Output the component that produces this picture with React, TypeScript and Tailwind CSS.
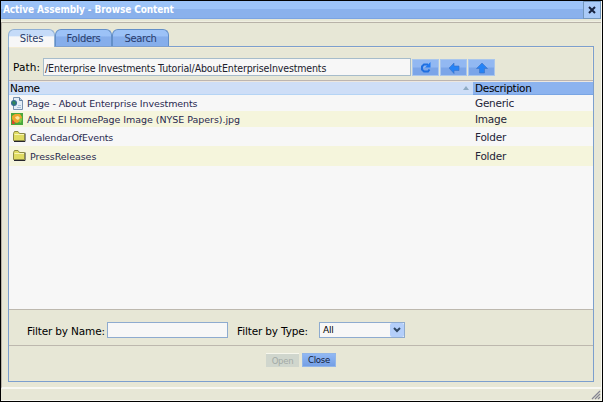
import React from "react";

const rows = [
  { icon: "page", name: "Page - About Enterprise Investments", type: "Generic", row: "h-4 bg-[#f7f7f7]", pad: "pl-[2px] gap-[4px]", text: "tracking-[-0.11px]" },
  { icon: "image", name: "About EI HomePage Image (NYSE Papers).jpg", type: "Image", row: "h-4 bg-[#f5f5dc]", pad: "pl-[2px] gap-[4px]", text: "tracking-[-0.04px]" },
  { icon: "folder", name: "CalendarOfEvents", type: "Folder", row: "h-[19px] bg-[#f7f7f7]", pad: "pl-[4px] gap-[3px]", text: "tracking-[-0.16px]" },
  { icon: "folder", name: "PressReleases", type: "Folder", row: "h-5 bg-[#f5f5dc]", pad: "pl-[4px] gap-[3px]", text: "tracking-[-0.06px]" },
];

function RowIcon({ kind }: { kind: string }) {
  if (kind === "page")
    return (
      <svg width="12" height="13" viewBox="0 0 12 13" className="shrink-0">
        <path d="M2.5.5h6l3 3v9h-9z" fill="#e3edf7" stroke="#7891ae" />
        <path d="M8.5.5v3h3" fill="#b9cee2" stroke="#5f7d9e" />
        <path d="M6 10.5h4M7 8.500h3" stroke="#a9c0d8" />
        <circle cx="3" cy="6" r="3" fill="#326b91" />
        <path d="M1 5l2-1 2 2-2 2z" fill="#2f8a55" />
      </svg>
    );
  if (kind === "image")
    return (
      <svg width="12" height="12" viewBox="0 0 12 12" className="shrink-0">
        <path d="M0 0h12v12H0z" fill="#48a83c" />
        <path d="M1 3l3-2 5 0 2 3-1 4-4 2-3-1-2-3z" fill="#eda52c" />
        <path d="M4 4l3-1 2 2-2 2-2-1z" fill="#f9e7a0" />
        <path d="M1 7l2 1 1 3H1z" fill="#d9482c" />
        <path d="M9 5l2 1-1 4-2-1z" fill="#7fcf4b" />
      </svg>
    );
  return (
    <svg width="14" height="12" viewBox="0 0 14 12" className="shrink-0">
      <path d="M1 10.500h11V2.500" fill="none" stroke="#26262e" />
      <path d="M.5 9.500V2.500l1-2h3.500l1.500 2h5v7z" fill="#dfdb62" stroke="#8c8b45" />
      <path d="M1.500 3.500h9.500" stroke="#f7f5b5" />
    </svg>
  );
}

function Tab({ label, active, cls }: { label: string; active?: boolean; cls: string }) {
  return (
    <div
      className={
        "flex justify-center rounded-t-[6px] border border-b-0 text-[10px] leading-[17px] text-[#293c6b] " +
        cls +
        (active
          ? " h-[18px] border-[#8eafd4] bg-linear-to-b from-[#c5dbf8] from-35% to-[#f7f7f7] to-40%"
          : " h-[17px] border-[#638fc8] bg-linear-to-b from-[#9cc2f7] from-35% to-[#86aeeb] to-45%")
      }
    >
      {label}
    </div>
  );
}

function NavButton({ children }: { children: React.ReactNode }) {
  return (
    <button className="flex h-[17px] w-[27px] items-center justify-center border border-[#a9c6ec] bg-linear-to-b from-[#92b8f2] from-45% to-[#7ba5e8] to-55% pt-px">
      {children}
    </button>
  );
}

export default function App() {
  return (
    <div className="h-[402px] w-[603px] overflow-hidden border border-black bg-[#e7e7d6] font-['DejaVu_Sans',Verdana,sans-serif] text-black">
      <div className="flex h-full flex-col border-r border-b border-[#f8f8f2] whitespace-nowrap">
        <header className="flex h-[18px] shrink-0 justify-between border-b border-[#7ba4e2] bg-linear-to-b from-[#9cc3f8] from-45% to-[#8ab1ec] to-50%">
          <h1 className="pl-[2px] text-[10px] leading-[17px] font-bold tracking-[-0.1px] text-white [font-stretch:condensed]">Active Assembly - Browse Content</h1>
          <button className="flex h-[18px] w-[18px] items-center justify-center border border-[#7297bd] bg-[#a9caf7]">
            <svg width="8" height="8" viewBox="0 0 8 8">
              <path d="M1 1l6 6M7 1L1 7" stroke="#17233f" strokeWidth="2" />
            </svg>
          </button>
        </header>
        <div className="h-[3px] shrink-0 border-b border-[#efefe2]" />
        <div className="flex h-[367px] shrink-0 flex-col border-t border-l border-[#b8b2a8] border-b-2 border-b-[#f8f8f2] pl-[6px]">
          <div className="flex h-[23px] shrink-0 items-end pt-[6px]">
            <div className="z-10 -mb-px"><Tab label="Sites" active cls="w-[47px] tracking-[-0.2px]" /></div>
            <Tab label="Folders" cls="w-[57px] tracking-[-0.3px]" />
            <Tab label="Search" cls="w-[57px] tracking-[-0.4px]" />
          </div>
          <main className="flex h-[336px] w-[586px] shrink-0 flex-col border border-[#7c9fce]">
            <section className="flex h-[33px] shrink-0 items-center border-t border-r border-[#f4ecd4] pt-[6px] pl-[4px]">
              <label className="w-[30px] pt-[2px] text-[10.500px] tracking-[0.1px]">Path:</label>
              <div className="mr-px h-[18px] w-[368px] border border-[#a6bccb] bg-[#f7f7f7] pt-px pl-[1px] text-[10.500px] leading-[16px] tracking-[-0.13px] text-[#20202c] [font-stretch:condensed]">
                /Enterprise Investments Tutorial/AboutEnterpriseInvestments
              </div>
              <div className="flex gap-[1px]">
                <NavButton>
                  <svg width="13" height="13" viewBox="0 0 13 13">
                    <path d="M9 3.500H5L3 5.500v3l2 2h4l1.500-2" fill="none" stroke="#1f6fe0" strokeWidth="2" />
                    <path d="M6 6.500h5.500V1z" fill="#1f78f0" />
                  </svg>
                </NavButton>
                <NavButton>
                  <svg width="12" height="12" viewBox="0 0 12 12">
                    <path d="M1 6l5-5v3h5v4.500H6v3z" fill="#2583f6" stroke="#3a70c4" strokeWidth=".6" />
                  </svg>
                </NavButton>
                <NavButton>
                  <svg width="12" height="12" viewBox="0 0 12 12">
                    <path d="M6 1l5.500 5.500H8.500V11h-5V6.500h-3z" fill="#2583f6" stroke="#3a70c4" strokeWidth=".6" />
                  </svg>
                </NavButton>
              </div>
            </section>
            <div className="h-[2px] shrink-0 border-t border-[#bdb5b0] bg-[#ede7df]" />
            <section className="h-[227px] shrink-0 bg-[#f7f7f7]">
              <div className="flex h-[13px] text-[10.500px] leading-[12px] tracking-[-0.3px]">
                <div className="flex w-[464px] items-center justify-between border-b border-[#b5d4f5] bg-[#cedef7] pr-[4px] pl-[1px]">
                  <span>Name</span>
                  <svg width="6" height="5" viewBox="0 0 6 5"><path d="M3 0l3 4H0z" fill="#8eaac3" /></svg>
                </div>
                <div className="flex-1 border-b border-[#79a5e4] bg-[#8cb3ef] pl-[2px]">Description</div>
              </div>
              {rows.map((r) => (
                <div key={r.name} className={"flex items-center " + r.row}>
                  <div className={"flex w-[464px] items-center text-[9.500px] leading-[10px] text-[#292950] " + r.pad}>
                    <RowIcon kind={r.icon} />
                    <span className={"mt-[2px] " + r.text}>{r.name}</span>
                  </div>
                  <div className="pl-[2px] text-[10.500px] leading-[14px] tracking-[-0.25px] text-[#242438]">{r.type}</div>
                </div>
              ))}
            </section>
            <section className="flex h-[37px] shrink-0 items-center border-y border-[#bdb8ae] pt-[5px] pl-[18px] text-[10.500px] tracking-[-0.15px]">
              <label className="w-[80px] pt-[3px]">Filter by Name:</label>
              <input className="h-[16px] w-[121px] border border-[#8eabcf] bg-[#f7f7f7]" />
              <label className="ml-[9px] w-[82px] pt-[3px]">Filter by Type:</label>
              <div className="flex h-[16px] w-[86px] items-center justify-between border border-[#8eabcf] bg-[#f7f7f7] pl-[3px] text-[9px]">
                <span className="pt-[2px]">All</span>
                <span className="flex h-[14px] w-[14px] items-center justify-center rounded-[2px] bg-[#b4cffa]">
                  <svg width="8" height="6" viewBox="0 0 8 6"><path d="M1 1l3 3 3-3" fill="none" stroke="#304865" strokeWidth="2" /></svg>
                </span>
              </div>
            </section>
            <section className="flex flex-1 items-start gap-[3px] pt-[7px] pl-[257px] text-[9.500px] tracking-[-0.3px] [font-stretch:condensed]">
              <button className="h-[14px] w-[33px] border-t border-[#f7f7ed] bg-[#d0d6cd] leading-[13px] text-[#a3aaa5]">Open</button>
              <button className="h-[14px] w-[34px] border border-[#92b6e8] bg-linear-to-b from-[#91b8f4] to-[#749fe5] leading-[12px] text-[#101a39]">Close</button>
            </section>
          </main>
        </div>
        <footer className="flex flex-1 items-end justify-end">
          <svg width="10" height="10" viewBox="0 0 10 10">
            <path d="M1 9l8-8M4 9l5-5M7 9l2-2" stroke="#858591" strokeWidth="1.200" />
          </svg>
        </footer>
      </div>
    </div>
  );
}
